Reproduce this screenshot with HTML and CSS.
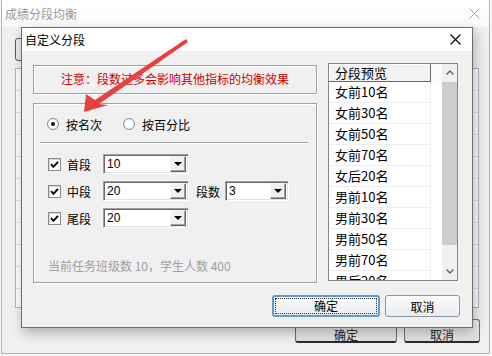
FILE: index.html
```html
<!DOCTYPE html>
<html lang="zh-CN">

<head>
    <meta charset="UTF-8">
    <title>自定义分段</title>
    <link rel="stylesheet" href="styles.css">
</head>

<body>
    <!-- background window -->
    <div class="main-window">
        <div class="main-title">
            <span>成绩分段均衡</span>
            <svg class="main-close" width="11" height="11" viewBox="0 0 11 11">
                <path d="M0.5 0.5 L10.5 10.5 M10.5 0.5 L0.5 10.5" stroke="#a0a0a0" stroke-width="1" fill="none" />
            </svg>
        </div>
        <div class="main-body">
            <div class="main-tab"></div>
            <div class="main-grid">
                <div class="main-grid-row"></div>
                <div class="main-grid-row"></div>
                <div class="main-grid-row"></div>
                <div class="main-grid-row"></div>
                <div class="main-grid-row"></div>
                <div class="main-grid-row"></div>
                <div class="main-grid-row"></div>
                <div class="main-grid-row"></div>
                <div class="main-grid-row"></div>
                <div class="main-grid-row"></div>
            </div>
            <div class="main-buttons">
                <button class="main-btn ok">确定</button>
                <button class="main-btn cancel">取消</button>
            </div>
        </div>
    </div>

    <!-- dialog -->
    <div class="dialog">
        <div class="dialog-title">
            <span>自定义分段</span>
            <svg width="11" height="11" viewBox="0 0 11 11">
                <path d="M0.5 0.5 L10.5 10.5 M10.5 0.5 L0.5 10.5" stroke="#000" stroke-width="1.1" fill="none" />
            </svg>
        </div>
        <div class="dialog-body">
            <div class="dialog-content">
                <div class="left-col">
                    <div class="warning">注意：段数过多会影响其他指标的均衡效果</div>
                    <div class="group">
                        <div class="radio-row">
                            <span class="radio checked"></span>
                            <span class="radio-label">按名次</span>
                            <span class="radio second"></span>
                            <span class="radio-label">按百分比</span>
                        </div>
                        <div class="separator"></div>
                        <div class="seg-row">
                            <span class="check"><svg width="9" height="9" viewBox="0 0 9 9"><path d="M1 4.2 L3.4 6.8 L8 1.8" stroke="#000" stroke-width="1.9" fill="none" /></svg></span>
                            <span class="seg-label">首段</span>
                            <div class="combo wide"><span>10</span><span class="combo-btn"></span></div>
                        </div>
                        <div class="seg-row">
                            <span class="check"><svg width="9" height="9" viewBox="0 0 9 9"><path d="M1 4.2 L3.4 6.8 L8 1.8" stroke="#000" stroke-width="1.9" fill="none" /></svg></span>
                            <span class="seg-label">中段</span>
                            <div class="combo wide"><span>20</span><span class="combo-btn"></span></div>
                            <span class="count-label">段数</span>
                            <div class="combo narrow"><span>3</span><span class="combo-btn"></span></div>
                        </div>
                        <div class="seg-row">
                            <span class="check"><svg width="9" height="9" viewBox="0 0 9 9"><path d="M1 4.2 L3.4 6.8 L8 1.8" stroke="#000" stroke-width="1.9" fill="none" /></svg></span>
                            <span class="seg-label">尾段</span>
                            <div class="combo wide"><span>20</span><span class="combo-btn"></span></div>
                        </div>
                        <div class="info">当前任务班级数 10，学生人数 400</div>
                    </div>
                </div>

                <div class="preview">
                    <div class="preview-list">
                        <div class="preview-head"><span class="head-cell">分段预览</span></div>
                        <div class="preview-row">女前10名</div>
                        <div class="preview-row">女前30名</div>
                        <div class="preview-row">女前50名</div>
                        <div class="preview-row">女前70名</div>
                        <div class="preview-row">女后20名</div>
                        <div class="preview-row">男前10名</div>
                        <div class="preview-row">男前30名</div>
                        <div class="preview-row">男前50名</div>
                        <div class="preview-row">男前70名</div>
                        <div class="preview-row">男后20名</div>
                    </div>
                    <div class="scrollbar">
                        <div class="scroll-arrow">
                            <svg width="8" height="5" viewBox="0 0 8 5"><path d="M0.5 4.5 L4 1 L7.5 4.5" stroke="#606060" stroke-width="1.3" fill="none" /></svg>
                        </div>
                        <div class="scroll-thumb"></div>
                        <div class="scroll-space"></div>
                        <div class="scroll-arrow">
                            <svg width="8" height="5" viewBox="0 0 8 5"><path d="M0.5 0.5 L4 4 L7.5 0.5" stroke="#606060" stroke-width="1.3" fill="none" /></svg>
                        </div>
                    </div>
                </div>
            </div>
            <div class="dialog-buttons">
                <button class="btn ok"><span class="focus">确定</span></button>
                <button class="btn cancel">取消</button>
            </div>
        </div>
    </div>

    <!-- red pointer arrow drawn over the dialog -->
    <svg class="arrow" width="492" height="356" viewBox="0 0 492 356">
        <polygon points="84,112 86,94 95,100 186,39 188,42 99,104 108,105" fill="#e8403f" />
    </svg>
</body>

</html>
```

FILE: styles.css
```css
* {
    box-sizing: border-box;
}

body {
    margin: 0;
    width: 492px;
    height: 356px;
    overflow: hidden;
    position: relative;
    background: #f8f8f8;
    font-family: "Noto Sans CJK SC", sans-serif;
    font-size: 12px;
    color: #000;
}

button {
    font-family: "Noto Sans CJK SC", sans-serif;
    font-size: 12px;
    padding: 0;
}

/* background window */
.main-window {
    margin-left: 1px;
    width: 489px;
    height: 354px;
    border: 1px solid #b4b4b4;
    border-top: none;
    background: #f0f0f0;
    display: flex;
    flex-direction: column;
}

.main-title {
    height: 27px;
    flex: none;
    background: linear-gradient(#ffffff, #fafafa);
    display: flex;
    align-items: center;
    justify-content: space-between;
    padding: 0 9px 0 3px;
    color: #9a9a9a;
}

.main-body {
    flex: 1;
    display: flex;
    flex-direction: column;
    padding: 11px 10px 0 13px;
}

.main-tab {
    width: 90px;
    height: 23px;
    border: 1px solid #5a5a5a;
    border-radius: 3px;
    background: #ececec;
}

.main-grid {
    margin-top: 7px;
    height: 240px;
    border: 1px solid #aab7c6;
    background: #fff;
    overflow: hidden;
}

.main-grid-row {
    height: 22px;
    border-bottom: 1px solid #e3e7eb;
}

.main-buttons {
    margin-top: 11px;
    margin-right: -1px;
    display: flex;
    justify-content: flex-end;
    gap: 7px;
}

.main-btn {
    height: 24px;
    border: 1px solid #707070;
    border-bottom: 2px solid #2b2b2b;
    border-radius: 3px;
    background: linear-gradient(#f3f3f3, #e2e2e2);
    color: #222;
    padding-top: 6px;
}

.main-btn.ok {
    width: 102px;
}

.main-btn.cancel {
    width: 76px;
}

/* dialog */
.dialog {
    position: absolute;
    left: 21px;
    top: 27px;
    width: 452px;
    height: 301px;
    border: 1px solid #6e6e6e;
    background: #f0f0f0;
    box-shadow: 2px 5px 12px rgba(0, 0, 0, 0.28);
    display: flex;
    flex-direction: column;
}

.dialog-title {
    height: 23px;
    flex: none;
    background: #fff;
    display: flex;
    align-items: center;
    justify-content: space-between;
    padding: 0 11px 0 3px;
}

.dialog-body {
    flex: 1;
    padding: 14px 11px 0 11px;
}

.dialog-content {
    display: flex;
    align-items: flex-start;
    gap: 11px;
}

.left-col {
    width: 284px;
}

.warning {
    height: 29px;
    border: 1px solid #a0a0a0;
    box-shadow: inset 1px 1px 0 #fff, 1px 1px 0 #fff;
    color: #d00000;
    text-align: center;
    line-height: 26px;
}

.group {
    margin-top: 9px;
    height: 180px;
    border: 1px solid #a0a0a0;
    box-shadow: inset 1px 1px 0 #fff, 1px 1px 0 #fff;
    padding-top: 13px;
}

.radio-row {
    height: 14px;
    display: flex;
    align-items: center;
    padding-left: 13px;
}

.radio {
    width: 12px;
    height: 12px;
    border-radius: 50%;
    border: 1px solid #8a8a8a;
    background: radial-gradient(circle, #ffffff 40%, #e8e8e8 100%);
    position: relative;
    flex: none;
}

.radio.checked::after {
    content: "";
    position: absolute;
    left: 3px;
    top: 3px;
    width: 4px;
    height: 4px;
    border-radius: 50%;
    background: #111;
}

.radio.second {
    margin-left: 21px;
}

.radio-label {
    margin-left: 7px;
}

.separator {
    margin: 11px 8px 0 6px;
    height: 2px;
    border-top: 1px solid #a0a0a0;
    border-bottom: 1px solid #fff;
}

.seg-row {
    height: 20px;
    margin-top: 7px;
    display: flex;
    align-items: center;
    padding-left: 14px;
}

.separator + .seg-row {
    margin-top: 10px;
}

.check {
    width: 13px;
    height: 13px;
    flex: none;
    border: 1px solid #8a8a8a;
    background: #fff;
    box-shadow: inset 1px 1px 0 #d8d8d8;
    display: flex;
    align-items: center;
    justify-content: center;
}

.seg-label {
    margin-left: 6px;
    margin-right: 12px;
}

.count-label {
    margin-left: 7px;
    margin-right: 5px;
}

.combo {
    height: 20px;
    background: #fff;
    border-top: 1px solid #a0a0a0;
    border-left: 1px solid #a0a0a0;
    border-right: 1px solid #fff;
    border-bottom: 1px solid #fff;
    box-shadow: inset 1px 1px 0 #696969, inset -1px -1px 0 #e3e3e3;
    display: flex;
    align-items: center;
    justify-content: space-between;
    padding: 2px 2px 2px 3px;
    font-family: "Liberation Sans", Arial, sans-serif;
    font-size: 12px;
}

.combo.wide {
    width: 86px;
}

.combo.narrow {
    width: 64px;
}

.combo-btn {
    width: 16px;
    height: 16px;
    background: #f0f0f0;
    border-top: 1px solid #f8f8f8;
    border-left: 1px solid #f8f8f8;
    border-right: 1px solid #696969;
    border-bottom: 1px solid #696969;
    box-shadow: inset -1px -1px 0 #a0a0a0;
    position: relative;
}

.combo-btn::after {
    content: "";
    position: absolute;
    left: 3px;
    top: 5px;
    border-left: 4px solid transparent;
    border-right: 4px solid transparent;
    border-top: 4px solid #000;
}

.info {
    margin-top: 29px;
    padding-left: 14px;
    color: #a0a0a0;
}

/* preview list */
.preview {
    width: 130px;
    height: 218px;
    margin-top: -2px;
    border: 1px solid #82878f;
    background: #fff;
    display: flex;
}

.preview-list {
    flex: 1;
    overflow: hidden;
    font-size: 13px;
}

.preview-head {
    height: 18px;
    display: flex;
    background: #fbfbfb;
}

.head-cell {
    width: 102px;
    border-right: 1px solid #6a6a6a;
    border-bottom: 1px solid #6a6a6a;
    box-shadow: inset 1px 1px 0 #fff;
    padding-left: 6px;
    line-height: 17px;
    background: #f2f2f2;
}

.preview-row {
    height: 21px;
    width: 102px;
    border-bottom: 1px solid #eeeeee;
    border-right: 1px solid #eeeeee;
    padding-left: 6px;
    line-height: 20px;
}

.scrollbar {
    width: 15px;
    flex: none;
    background: #f0f0f0;
    display: flex;
    flex-direction: column;
}

.scroll-arrow {
    height: 17px;
    display: flex;
    align-items: center;
    justify-content: center;
}

.scroll-thumb {
    margin-top: 1px;
    height: 163px;
    background: #cdcdcd;
}

.scroll-space {
    flex: 1;
}

/* dialog buttons */
.dialog-buttons {
    margin-top: 12px;
    display: flex;
    justify-content: flex-end;
    gap: 5px;
    margin-right: 1px;
}

.btn {
    height: 22px;
    border-radius: 3px;
    background: linear-gradient(#fbfbfb, #e9ebee);
    color: #000;
}

.btn.ok {
    width: 108px;
    border: 2px solid #5d9bd2;
    padding: 1px;
}

.btn.ok .focus {
    display: block;
    height: 16px;
    line-height: 14px;
    border: 1px dotted #333;
}

.btn.cancel {
    width: 75px;
    border: 1px solid #8c98a5;
}

.arrow {
    position: absolute;
    left: 0;
    top: 0;
    pointer-events: none;
}
```
